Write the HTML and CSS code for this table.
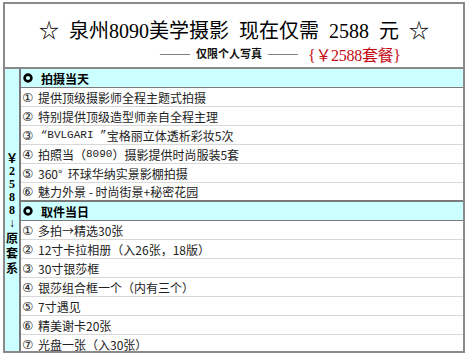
FILE: index.html
```html
<!DOCTYPE html>
<html lang="zh">
<head>
<meta charset="utf-8">
<link rel="stylesheet" href="styles.css">
</head>
<body>
<div class="box">
  <div class="top">
    <div class="title">☆&nbsp;&nbsp;泉州8090美学摄影&nbsp;&nbsp;现在仅需&nbsp;&nbsp;2588&nbsp;&nbsp;元&nbsp;&nbsp;☆</div>
    <div class="sub">
      <span class="only"><span class="dash">——</span><span class="only-t">仅限个人写真</span><span class="dash">——</span></span>
      <span class="price">{￥2588套餐}</span>
    </div>
  </div>
  <div class="table">
    <div class="side">
      <span class="c">￥</span><span class="d">2</span><span class="d">5</span><span class="d">8</span><span class="d">8</span><span class="d">↓</span><span class="c">原</span><span class="c">套</span><span class="c">系</span>
    </div>
    <div class="main">
      <div class="head"><svg class="ring" width="10" height="10" viewBox="0 0 10 10"><circle cx="5" cy="5" r="3.4" fill="none" stroke="#000" stroke-width="2.6"/></svg><span>拍摄当天</span></div>
      <div class="row"><span class="n">①</span>提供顶级摄影师全程主题式拍摄</div>
      <div class="row"><span class="n">②</span>特别提供顶级造型师亲自全程主理</div>
      <div class="row"><span class="n">③</span>&nbsp;<span class="mono">“BVLGARI ”</span>宝格丽立体透析彩妆5次</div>
      <div class="row"><span class="n">④</span>拍照当（<span class="mono">8090</span>）摄影提供时尚服装5套</div>
      <div class="row"><span class="n">⑤</span>360°&nbsp;&nbsp;环球华纳实景影棚拍摄</div>
      <div class="row last"><span class="n">⑥</span>魅力外景 - 时尚街景+秘密花园</div>
      <div class="head"><svg class="ring" width="10" height="10" viewBox="0 0 10 10"><circle cx="5" cy="5" r="3.4" fill="none" stroke="#000" stroke-width="2.6"/></svg><span>取件当日</span></div>
      <div class="row"><span class="n">①</span>多拍→精选30张</div>
      <div class="row"><span class="n">②</span>12寸卡拉相册（入26张，18版）</div>
      <div class="row"><span class="n">③</span>30寸银莎框</div>
      <div class="row"><span class="n">④</span>银莎组合框一个（内有三个）</div>
      <div class="row"><span class="n">⑤</span>7寸遇见</div>
      <div class="row"><span class="n">⑥</span>精美谢卡20张</div>
      <div class="row"><span class="n">⑦</span>光盘一张（入30张）</div>
    </div>
  </div>
</div>
</body>
</html>
```

FILE: styles.css
```css
html, body {
  margin: 0;
  padding: 0;
  background: #fff;
}
body {
  width: 470px;
  height: 354px;
  overflow: hidden;
}
.box {
  box-sizing: border-box;
  margin: 2px 0 0 3px;
  width: 462px;
  height: 351px;
  border: 2px solid #8a8a8a;
  overflow: hidden;
}
.top {
  height: 63px;
  border-bottom: 2px solid #8a8a8a;
}
.title {
  padding-top: 16px;
  text-align: center;
  font-family: "Liberation Serif", "Noto Sans CJK SC", serif;
  font-size: 20px;
  line-height: 22px;
  color: #000;
  white-space: nowrap;
}
.sub {
  display: flex;
  align-items: center;
  padding-left: 155px;
  gap: 10px;
  height: 22px;
}
.only {
  display: flex;
  align-items: center;
  gap: 6px;
  white-space: nowrap;
}
.dash {
  font-family: "Liberation Serif", serif;
  font-size: 15px;
  line-height: 15px;
  color: #111;
}
.only-t {
  font-family: "Noto Sans CJK SC", sans-serif;
  font-size: 11px;
  font-weight: bold;
  color: #111;
}
.price {
  font-family: "Liberation Serif", "Noto Sans CJK SC", serif;
  font-size: 16px;
  color: #c40c14;
  white-space: nowrap;
  margin-top: 2px;
  letter-spacing: -0.3px;
}
.table {
  display: flex;
}
.side {
  width: 16px;
  flex-shrink: 0;
  height: 282px;
  background: #ccffff;
  border-right: 2px solid #7a7a7a;
  display: flex;
  flex-direction: column;
  align-items: center;
  justify-content: center;
  font-family: "Liberation Serif", "Noto Sans CJK SC", serif;
  font-weight: bold;
  font-size: 12px;
  color: #000;
  padding-top: 4px;
  box-sizing: border-box;
}
.side span {
  display: flex;
  align-items: center;
  justify-content: center;
  overflow: visible;
}
.side .d {
  height: 13px;
  line-height: 13px;
}
.side .c {
  height: 15px;
  line-height: 15px;
  font-size: 12px;
  font-family: "Noto Sans CJK SC", sans-serif;
}
.main {
  flex: 1;
}
.head {
  height: 18px;
  background: #ccffff;
  border-bottom: 1px solid #7a7a7a;
  display: flex;
  align-items: center;
  font-family: "Noto Sans CJK SC", sans-serif;
  font-size: 12px;
  font-weight: bold;
  color: #000;
}
.ring {
  margin: 0 8px 0 2px;
}
.row {
  height: 18px;
  border-bottom: 1px solid #d8d8d8;
  display: flex;
  align-items: center;
  font-family: "Noto Sans CJK SC", sans-serif;
  font-size: 12px;
  color: #222;
  white-space: nowrap;
}
.row.last {
  border-bottom: 2px solid #7a7a7a;
  height: 17px;
}
.n {
  display: inline-block;
  width: 16px;
  margin-left: 1px;
  font-family: "DejaVu Sans", sans-serif;
  font-size: 12.5px;
}
.mono {
  font-family: "Liberation Mono", monospace;
  font-size: 11px;
}
```
